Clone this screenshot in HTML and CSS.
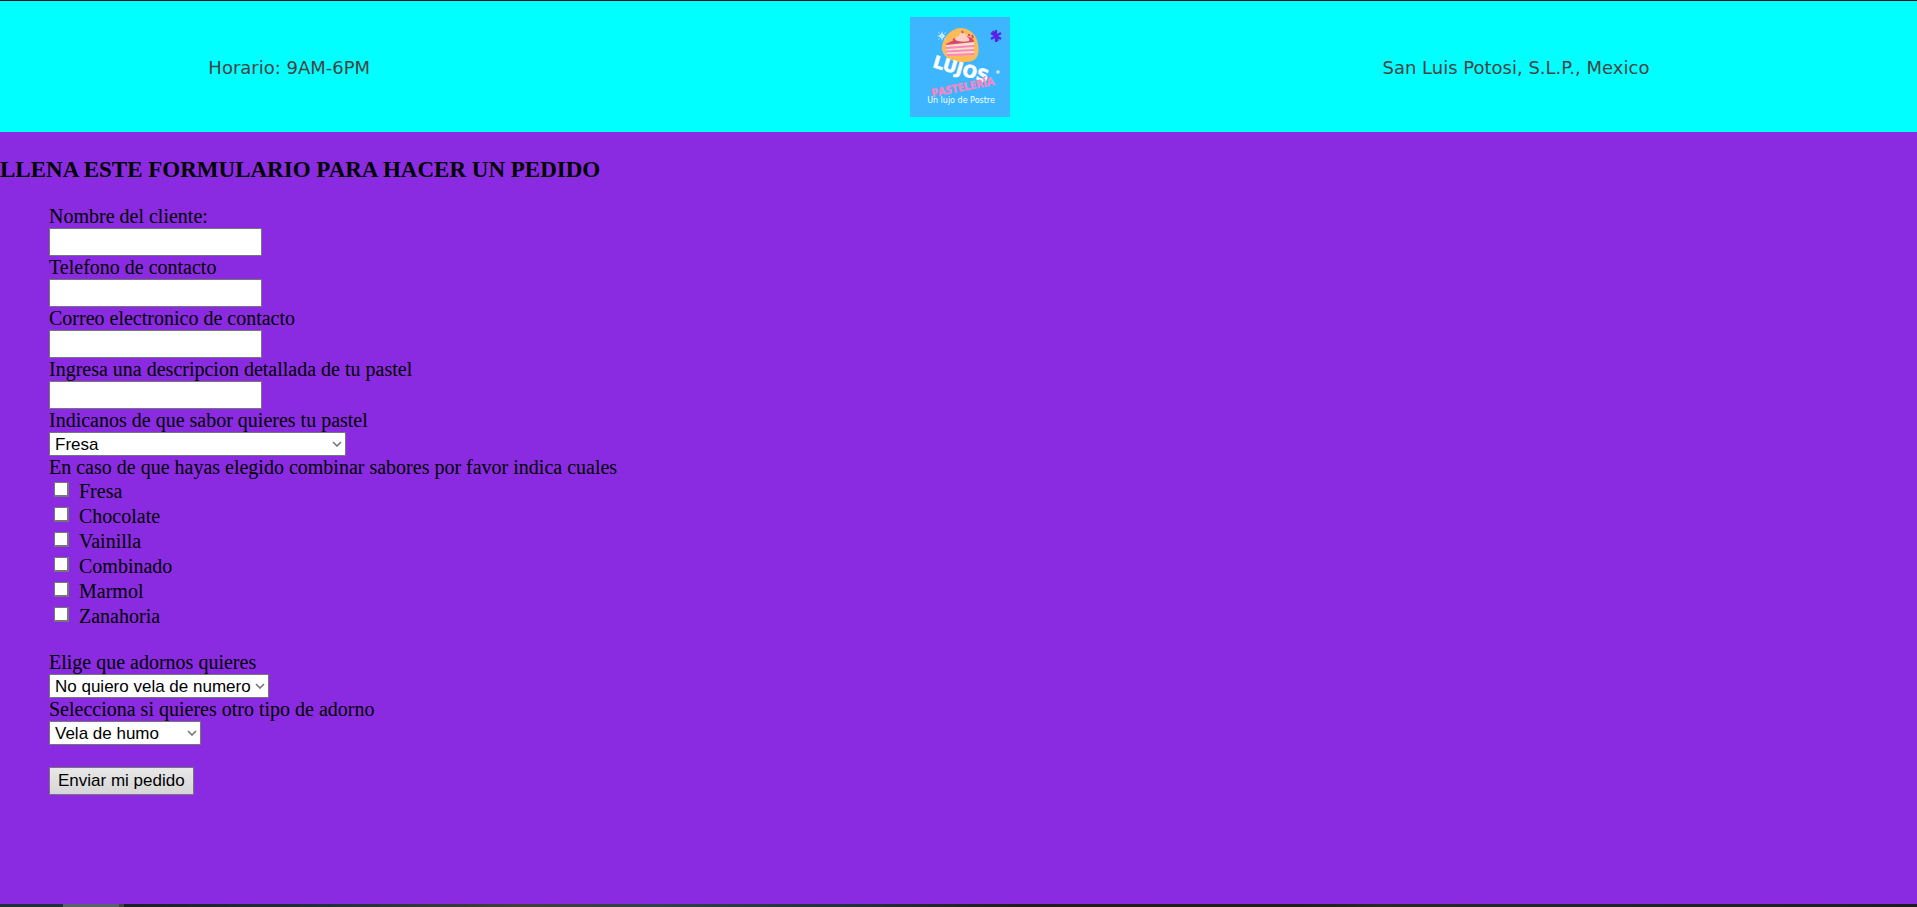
FILE: index.html
```html
<!DOCTYPE html>
<html lang="es">
<head>
<meta charset="utf-8">
<title>Lujos Pastelería - Pedido</title>
<link rel="stylesheet" href="styles.css">
</head>
<body>
<header class="top">
  <p class="top-hours">Horario: 9AM-6PM</p>
  <svg class="logo" viewBox="0 0 100 100" role="img" aria-label="Lujos Pastelería">
    <rect width="100" height="100" fill="#3db5ff"/>
    <path d="M32 33C31 24 39 12 50 11C60 11 67 18 68 27C70 38 67 45 56 45C45 46 34 42 32 33Z" fill="#fdba59"/>
    <path d="M36 27L46 22L56 19L62 21L64 24L64 28L36 30Z" fill="#d9486e"/>
    <path d="M36 28L64 25L64 37L37 38.500Z" fill="#fde3c0"/>
    <path d="M36 31L64 29M36.500 34.500L64 33M37 38L64 37" stroke="#fb84c4" stroke-width="1.800" fill="none"/>
    <path d="M45 23Q46 19 49 19Q50 15 53 16Q57 17 57 20Q60 21 59 24Q52 26 45 23Z" fill="#fcd0c0"/>
    <path d="M52 14l1 2M58 18l2 0M43 22l2 1M62 18l1 3" stroke="#d9486e" stroke-width="2"/>
    <path d="M86 13V25M81 16L91 22M81 22L91 16M83 14L88 24" stroke="#5a20e8" stroke-width="2.200"/>
    <path d="M32 14L33 18L36 19L33 20L32 24L31 20L27 19L31 18Z" fill="#e8f8ff"/>
    <path d="M28 15L36 23M36 15L28 23" stroke="#a5defe" stroke-width="0.800"/>
    <circle cx="88" cy="55" r="1.800" fill="#c8ecff"/>
    <text class="logo-name" x="22" y="50" transform="rotate(16 22 50)">LUJOS</text>
    <text class="logo-kind" x="22" y="80" transform="rotate(-11 22 80)">PASTELERÍA</text>
    <text class="logo-tag" x="51" y="86">Un lujo de Postre</text>
  </svg>
  <p class="top-place">San Luis Potosi, S.L.P., Mexico</p>
</header>

<main class="page">
  <h1 class="title">LLENA ESTE FORMULARIO PARA HACER UN PEDIDO</h1>
  <form class="order">
    <label for="nombre">Nombre del cliente:</label>
    <input class="field" type="text" id="nombre">
    <label for="telefono">Telefono de contacto</label>
    <input class="field" type="tel" id="telefono">
    <label for="correo">Correo electronico de contacto</label>
    <input class="field" type="email" id="correo">
    <label for="descripcion">Ingresa una descripcion detallada de tu pastel</label>
    <input class="field" type="text" id="descripcion">
    <label for="sabor">Indicanos de que sabor quieres tu pastel</label>
    <select class="choice choice-wide" id="sabor"><option>Fresa</option><option>Chocolate</option><option>Vainilla</option></select>
    <fieldset class="flavours">
      <legend>En caso de que hayas elegido combinar sabores por favor indica cuales</legend>
      <label class="check"><input type="checkbox">Fresa</label>
      <label class="check"><input type="checkbox">Chocolate</label>
      <label class="check"><input type="checkbox">Vainilla</label>
      <label class="check"><input type="checkbox">Combinado</label>
      <label class="check"><input type="checkbox">Marmol</label>
      <label class="check"><input type="checkbox">Zanahoria</label>
    </fieldset>
    <label for="vela">Elige que adornos quieres</label>
    <select class="choice choice-medium" id="vela"><option>No quiero vela de numero</option></select>
    <label for="adorno">Selecciona si quieres otro tipo de adorno</label>
    <select class="choice choice-small" id="adorno"><option>Vela de humo</option></select>
    <button class="send" type="submit">Enviar mi pedido</button>
  </form>
</main>
<footer class="strip"></footer>
</body>
</html>
```

FILE: styles.css
```css
* {
  box-sizing: border-box;
}

body {
  margin: 0;
  min-height: 100vh;
  display: flex;
  flex-direction: column;
  background: #8a2be2;
  color: #000;
  font-family: "Liberation Serif", "Times New Roman", serif;
  font-size: 20px;
  line-height: 23px;
}

.top {
  display: grid;
  grid-template-columns: 30% 40% 30%;
  align-items: center;
  justify-items: center;
  padding: 16px 0 15px 2px;
  border-top: 1px solid #101020;
  background: #00ffff;
  color: #444;
  font-family: Verdana, "DejaVu Sans", sans-serif;
  font-size: 18px;
}

.top p {
  margin: 0;
}

.top .top-place {
  justify-self: start;
  padding-left: 40px;
}

.logo {
  width: 100px;
  height: 100px;
}

.logo-name {
  fill: #fff;
  stroke: #fff;
  stroke-width: 0.6px;
  stroke-linejoin: round;
  font: bold 17px "DejaVu Sans", sans-serif;
}

.logo-kind {
  fill: #fd84c0;
  stroke: #fd84c0;
  stroke-width: 0.4px;
  font: bold 11px "Open Sans", sans-serif;
}

.logo-tag {
  fill: #fff;
  font: 8px "DejaVu Sans", sans-serif;
  text-anchor: middle;
}

.page {
  flex: 1;
}

.title {
  margin: 25px 0 22px;
  font-size: 23px;
  line-height: 26px;
}

.order {
  display: flex;
  flex-direction: column;
  align-items: flex-start;
  padding-left: 49px;
}

.field,
.choice,
.send {
  margin: 0;
  border: 1px solid #767676;
  border-radius: 0;
  color: #000;
  font-family: "Liberation Sans", Arial, sans-serif;
  font-size: 17px;
}

.field {
  width: 213px;
  height: 28px;
  padding: 2px 4px;
  background: #fff;
}

.choice {
  height: 24px;
  padding: 0 5px;
  appearance: none;
  background: #fff url("data:image/svg+xml,%3Csvg xmlns='http://www.w3.org/2000/svg' width='10' height='6'%3E%3Cpath d='M1 1L5 5L9 1' fill='none' stroke='%23767676' stroke-width='1.6'/%3E%3C/svg%3E") no-repeat right 3px center;
}

.choice-wide {
  width: 297px;
}

.choice-medium {
  width: 220px;
}

.choice-small {
  width: 152px;
}

.flavours {
  display: flex;
  flex-direction: column;
  margin: 0 0 22px;
  padding: 0;
  border: 0;
}

.flavours legend {
  padding: 0;
}

.check {
  display: flex;
  align-items: flex-start;
  gap: 10px;
  padding-left: 5px;
  line-height: 25px;
}

.check input {
  width: 15px;
  height: 15px;
  margin: 3px 0 0;
  appearance: none;
  border: solid #767676;
  border-width: 1px 2px 2px 1px;
  background: #fff;
}

.send {
  height: 28px;
  margin-top: 22px;
  padding: 0 8px;
  background: linear-gradient(#e8e8e8, #d6d6d6);
}

.strip {
  height: 3px;
  background: linear-gradient(90deg, #20303c 0 63px, #58626a 63px 119px, #444 119px 124px, #1c2028 124px, #20303c 17%, #444038 27%, #30424a 34%, #22323e 44%, #241c1c 53%, #221e1c 68%, #2c2822 72%, #20282c 80%, #1e1c22 100%);
}
```
